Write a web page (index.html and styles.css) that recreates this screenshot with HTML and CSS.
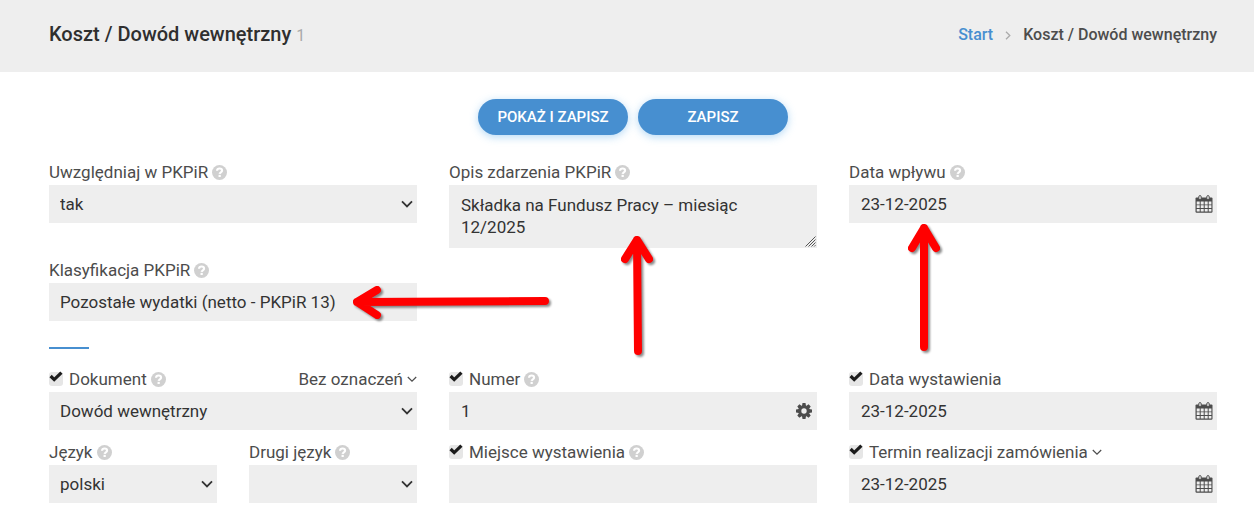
FILE: index.html
```html
<!DOCTYPE html>
<html lang="pl">
<head>
<meta charset="utf-8">
<meta name="viewport" content="width=device-width, initial-scale=1">
<title>Koszt / Dowód wewnętrzny</title>
<link rel="stylesheet" href="styles.css">
</head>
<body>
<svg class="sprite" aria-hidden="true">
  <symbol id="help" viewBox="0 0 14 14"><circle cx="7" cy="7" r="7" fill="#d0d0d0"/><path d="M4.700 5.400C4.800 3.900 5.800 3.300 7.100 3.300c1.400 0 2.300.8 2.300 2 0 1.500-2.200 1.500-2.300 3" fill="none" stroke="#fff" stroke-width="2"/><path d="M6.100 9.200h2.100v2H6.100z" fill="#fff"/></symbol>
  <symbol id="chevron" viewBox="0 0 12 8"><path d="M1 1.4 6 6.4 11 1.4" fill="none" stroke="currentColor" stroke-width="1.8"/></symbol>
  <symbol id="chevron-thin" viewBox="0 0 10 7"><path d="M.8 1 5 5.2 9.200 1" fill="none" stroke="currentColor" stroke-width="1.2"/></symbol>
  <symbol id="tick" viewBox="0 0 14 11"><path d="M1.600 5 5.200 8.600 12.400 1.600" fill="none" stroke="#1b1b1b" stroke-width="3.200"/></symbol>
  <symbol id="calendar" viewBox="0 0 18 18"><path d="M1.500 2.500h15q1 0 1 1v13q0 1.200-1.200 1.200H1.700Q.5 17.700.5 16.500v-13q0-1 1-1z" fill="#4c4c4c"/><path d="M1.700 6.500h3v3h-3zM5.700 6.500h3v3h-3zM9.700 6.500h3v3h-3zM13.700 6.500h2.700v3h-2.700zM1.700 10.300h3v2.800h-3zM5.700 10.300h3v2.800h-3zM9.700 10.300h3v2.800h-3zM13.700 10.300h2.700v2.800h-2.700zM1.700 14h3v2.600h-3zM5.700 14h3v2.600h-3zM9.700 14h3v2.600h-3zM13.700 14h2.700v2.600h-2.700z" fill="#eee"/><rect x="3.800" y=".6" width="2.400" height="4" rx="1.200" fill="#eee" stroke="#4c4c4c"/><rect x="11.800" y=".6" width="2.400" height="4" rx="1.200" fill="#eee" stroke="#4c4c4c"/></symbol>
  <symbol id="gear" viewBox="0 0 16 16"><g fill="#4c4c4c"><circle cx="8" cy="8" r="5.800"/><path id="teeth" d="M6.500 0h3l.5 3H6zM6 13h4l-.5 3h-3z"/><use href="#teeth" transform="rotate(45 8 8)"/><use href="#teeth" transform="rotate(90 8 8)"/><use href="#teeth" transform="rotate(135 8 8)"/></g><circle cx="8" cy="8" r="2.700" fill="#eee"/></symbol>
  <symbol id="grip" viewBox="0 0 11 11"><path d="M.5 10.500 10.500.5M3.500 10.500 10.500 3.500M6.500 10.500 10.500 6.500M9.200 10.500 10.500 9.200" fill="none" stroke="#555"/></symbol>
</svg>

<header class="page-header">
  <h1 class="title">Koszt / Dowód wewnętrzny <small class="count">1</small></h1>
  <nav class="breadcrumb" aria-label="Nawigacja">
    <a class="crumb-link" href="#">Start</a>
    <svg class="crumb-sep" viewBox="0 0 6 9" aria-hidden="true"><path d="M1 .8 4.800 4.500 1 8.200" fill="none" stroke="#aaa" stroke-width="1.300"/></svg>
    <span>Koszt / Dowód wewnętrzny</span>
  </nav>
</header>

<main>
<form class="form">
  <div class="actions">
    <button class="btn" type="button">POKAŻ I ZAPISZ</button>
    <button class="btn" type="button">ZAPISZ</button>
  </div>

  <div class="grid">
    <div class="field">
      <div class="caption"><label for="pkpir">Uwzględniaj w PKPiR</label><svg class="help"><use href="#help"/></svg></div>
      <div class="control"><select class="input select" id="pkpir"><option>tak</option></select><svg class="chevron"><use href="#chevron"/></svg></div>
    </div>
    <div class="field">
      <div class="caption"><label for="opis">Opis zdarzenia PKPiR</label><svg class="help"><use href="#help"/></svg></div>
      <div class="control"><textarea class="input area" id="opis">Składka na Fundusz Pracy – miesiąc 12/2025</textarea><svg class="grip"><use href="#grip"/></svg></div>
      <svg class="arrow arrow-opis" viewBox="0 0 36 128" aria-hidden="true"><path d="M18 8 19 119M6 27 18 8 30 27"/></svg>
    </div>
    <div class="field">
      <div class="caption"><label for="wplyw">Data wpływu</label><svg class="help"><use href="#help"/></svg></div>
      <div class="control"><input class="input" id="wplyw" type="text" value="23-12-2025"><svg class="calendar"><use href="#calendar"/></svg></div>
      <svg class="arrow arrow-wplyw" viewBox="0 0 36 134" aria-hidden="true"><path d="M18 8V127M6 28 18 8 30 28"/></svg>
    </div>
    <div class="field">
      <div class="caption"><label for="klasyfikacja">Klasyfikacja PKPiR</label><svg class="help"><use href="#help"/></svg></div>
      <div class="control"><select class="input select" id="klasyfikacja"><option>Pozostałe wydatki (netto - PKPiR 13)</option></select></div>
      <svg class="arrow arrow-klasyfikacja" viewBox="0 0 204 36" aria-hidden="true"><path d="M9 18 197 17M29 6 9 18 29 31"/></svg>
    </div>
  </div>

  <hr class="divider">

  <div class="grid">
    <div class="field">
      <div class="caption">
        <span class="check"><input class="box" id="c-dokument" type="checkbox" checked aria-label="Dokument"><svg class="tick"><use href="#tick"/></svg></span>
        <label for="dokument">Dokument</label><svg class="help"><use href="#help"/></svg>
        <button class="menu menu-end" type="button">Bez oznaczeń<svg class="chevron-thin"><use href="#chevron-thin"/></svg></button>
      </div>
      <div class="control"><select class="input select" id="dokument"><option>Dowód wewnętrzny</option></select><svg class="chevron"><use href="#chevron"/></svg></div>
    </div>
    <div class="field">
      <div class="caption">
        <span class="check"><input class="box" id="c-numer" type="checkbox" checked aria-label="Numer"><svg class="tick"><use href="#tick"/></svg></span>
        <label for="numer">Numer</label><svg class="help"><use href="#help"/></svg>
      </div>
      <div class="control"><input class="input" id="numer" type="text" value="1"><svg class="gear"><use href="#gear"/></svg></div>
    </div>
    <div class="field">
      <div class="caption">
        <span class="check"><input class="box" id="c-wystawienie" type="checkbox" checked aria-label="Data wystawienia"><svg class="tick"><use href="#tick"/></svg></span>
        <label for="wystawienie">Data wystawienia</label>
      </div>
      <div class="control"><input class="input" id="wystawienie" type="text" value="23-12-2025"><svg class="calendar"><use href="#calendar"/></svg></div>
    </div>

    <div class="pair">
      <div class="field">
        <div class="caption"><label for="jezyk">Język</label><svg class="help"><use href="#help"/></svg></div>
        <div class="control"><select class="input select" id="jezyk"><option>polski</option></select><svg class="chevron"><use href="#chevron"/></svg></div>
      </div>
      <div class="field">
        <div class="caption"><label for="jezyk2">Drugi język</label><svg class="help"><use href="#help"/></svg></div>
        <div class="control"><select class="input select" id="jezyk2"><option></option></select><svg class="chevron"><use href="#chevron"/></svg></div>
      </div>
    </div>
    <div class="field">
      <div class="caption">
        <span class="check"><input class="box" id="c-miejsce" type="checkbox" checked aria-label="Miejsce wystawienia"><svg class="tick"><use href="#tick"/></svg></span>
        <label for="miejsce">Miejsce wystawienia</label><svg class="help"><use href="#help"/></svg>
      </div>
      <div class="control"><input class="input" id="miejsce" type="text"></div>
    </div>
    <div class="field">
      <div class="caption">
        <span class="check"><input class="box" id="c-termin" type="checkbox" checked aria-label="Termin realizacji zamówienia"><svg class="tick"><use href="#tick"/></svg></span>
        <label for="termin">Termin realizacji zamówienia</label><svg class="chevron-thin"><use href="#chevron-thin"/></svg>
      </div>
      <div class="control"><input class="input" id="termin" type="text" value="23-12-2025"><svg class="calendar"><use href="#calendar"/></svg></div>
    </div>
  </div>
</form>
</main>
</body>
</html>
```
FILE: styles.css
```css
* {
  box-sizing: border-box;
}

body {
  margin: 0;
  background: #fff;
  color: #4c4c4c;
  font-family: Roboto, "Liberation Sans", sans-serif;
  font-size: 17px;
}

.sprite {
  position: absolute;
  width: 0;
  height: 0;
}

/* Header */
.page-header {
  display: flex;
  justify-content: space-between;
  align-items: center;
  padding: 22px 37px 24px 49px;
  background: #eee;
}

.title {
  margin: 0;
  color: #2f2f2f;
  font-size: 20px;
  font-weight: 500;
  line-height: 24px;
}

.count {
  color: #aaa;
  font-size: 16px;
  font-weight: 400;
}

.breadcrumb {
  display: flex;
  align-items: center;
  gap: 12px;
  font-size: 16px;
  font-weight: 500;
  line-height: 24px;
}

.crumb-link {
  color: #478fd0;
  text-decoration: none;
}

.crumb-sep {
  width: 6px;
  height: 9px;
}

/* Form */
.form {
  padding: 27px 37px 24px 49px;
}

.actions {
  display: flex;
  justify-content: center;
  gap: 10px;
  margin-bottom: 24px;
}

.btn {
  width: 150px;
  height: 36px;
  padding: 0;
  border: 0;
  border-radius: 18px;
  background: #478fd0;
  box-shadow: 0 2px 8px rgba(71, 160, 230, 0.4);
  color: #fff;
  font: 500 15px Roboto, sans-serif;
}

.grid {
  display: grid;
  grid-template-columns: repeat(3, minmax(0, 1fr));
  gap: 9px 32px;
}

.pair {
  display: grid;
  grid-template-columns: repeat(2, minmax(0, 1fr));
  gap: 32px;
}

.field {
  position: relative;
}

.caption {
  display: flex;
  align-items: center;
  height: 26px;
  line-height: 26px;
}

.help {
  width: 15px;
  height: 15px;
  margin-left: 4px;
}

.check {
  position: relative;
  display: flex;
  width: 14px;
  height: 14px;
  margin-right: 6px;
}

.box {
  width: 14px;
  height: 14px;
  margin: 0;
  border-radius: 3px;
  background: #e6e6e6;
  appearance: none;
}

.tick {
  position: absolute;
  top: -1px;
  left: 0;
  display: none;
  width: 14px;
  height: 11px;
  pointer-events: none;
}

.box:checked + .tick {
  display: block;
}

.menu {
  display: flex;
  align-items: center;
  padding: 0;
  border: 0;
  background: none;
  color: inherit;
  font: inherit;
}

.menu-end {
  margin-left: auto;
}

.chevron-thin {
  width: 10px;
  height: 7px;
  margin-left: 4px;
}

.control {
  position: relative;
  display: flex;
}

.input {
  width: 100%;
  height: 38px;
  padding: 0 12px;
  border: 0;
  border-radius: 0;
  background: #eee;
  color: #333;
  font: 17px/22px Roboto, sans-serif;
  appearance: none;
}

.select {
  padding: 0 11px;
}

.area {
  height: 63px;
  padding: 9px 12px;
  overflow: hidden;
  resize: none;
}

.grip {
  position: absolute;
  right: 1px;
  bottom: 1px;
  width: 11px;
  height: 11px;
  pointer-events: none;
}

.chevron,
.calendar,
.gear {
  position: absolute;
  top: 0;
  bottom: 0;
  margin: auto 0;
  pointer-events: none;
}

.chevron {
  right: 4px;
  width: 12px;
  height: 8px;
  color: #333;
}

.calendar {
  right: 4px;
  width: 18px;
  height: 18px;
}

.gear {
  right: 5px;
  width: 16px;
  height: 16px;
}

.divider {
  width: 40px;
  height: 2px;
  margin: 26px 0 17px;
  border: 0;
  background: #478fd0;
}

/* Annotation arrows over the fields */
.arrow {
  position: absolute;
  z-index: 1;
  overflow: visible;
  fill: none;
  stroke: #f00;
  stroke-width: 8px;
  stroke-linecap: round;
  stroke-linejoin: round;
  filter: drop-shadow(2px 2px 1px rgba(0, 0, 0, 0.45));
  pointer-events: none;
}

.arrow-opis {
  top: 73px;
  left: 170px;
  width: 36px;
  height: 128px;
}

.arrow-wplyw {
  top: 61px;
  left: 57px;
  width: 36px;
  height: 134px;
}

.arrow-klasyfikacja {
  top: 27px;
  left: 299px;
  width: 204px;
  height: 36px;
}
```
